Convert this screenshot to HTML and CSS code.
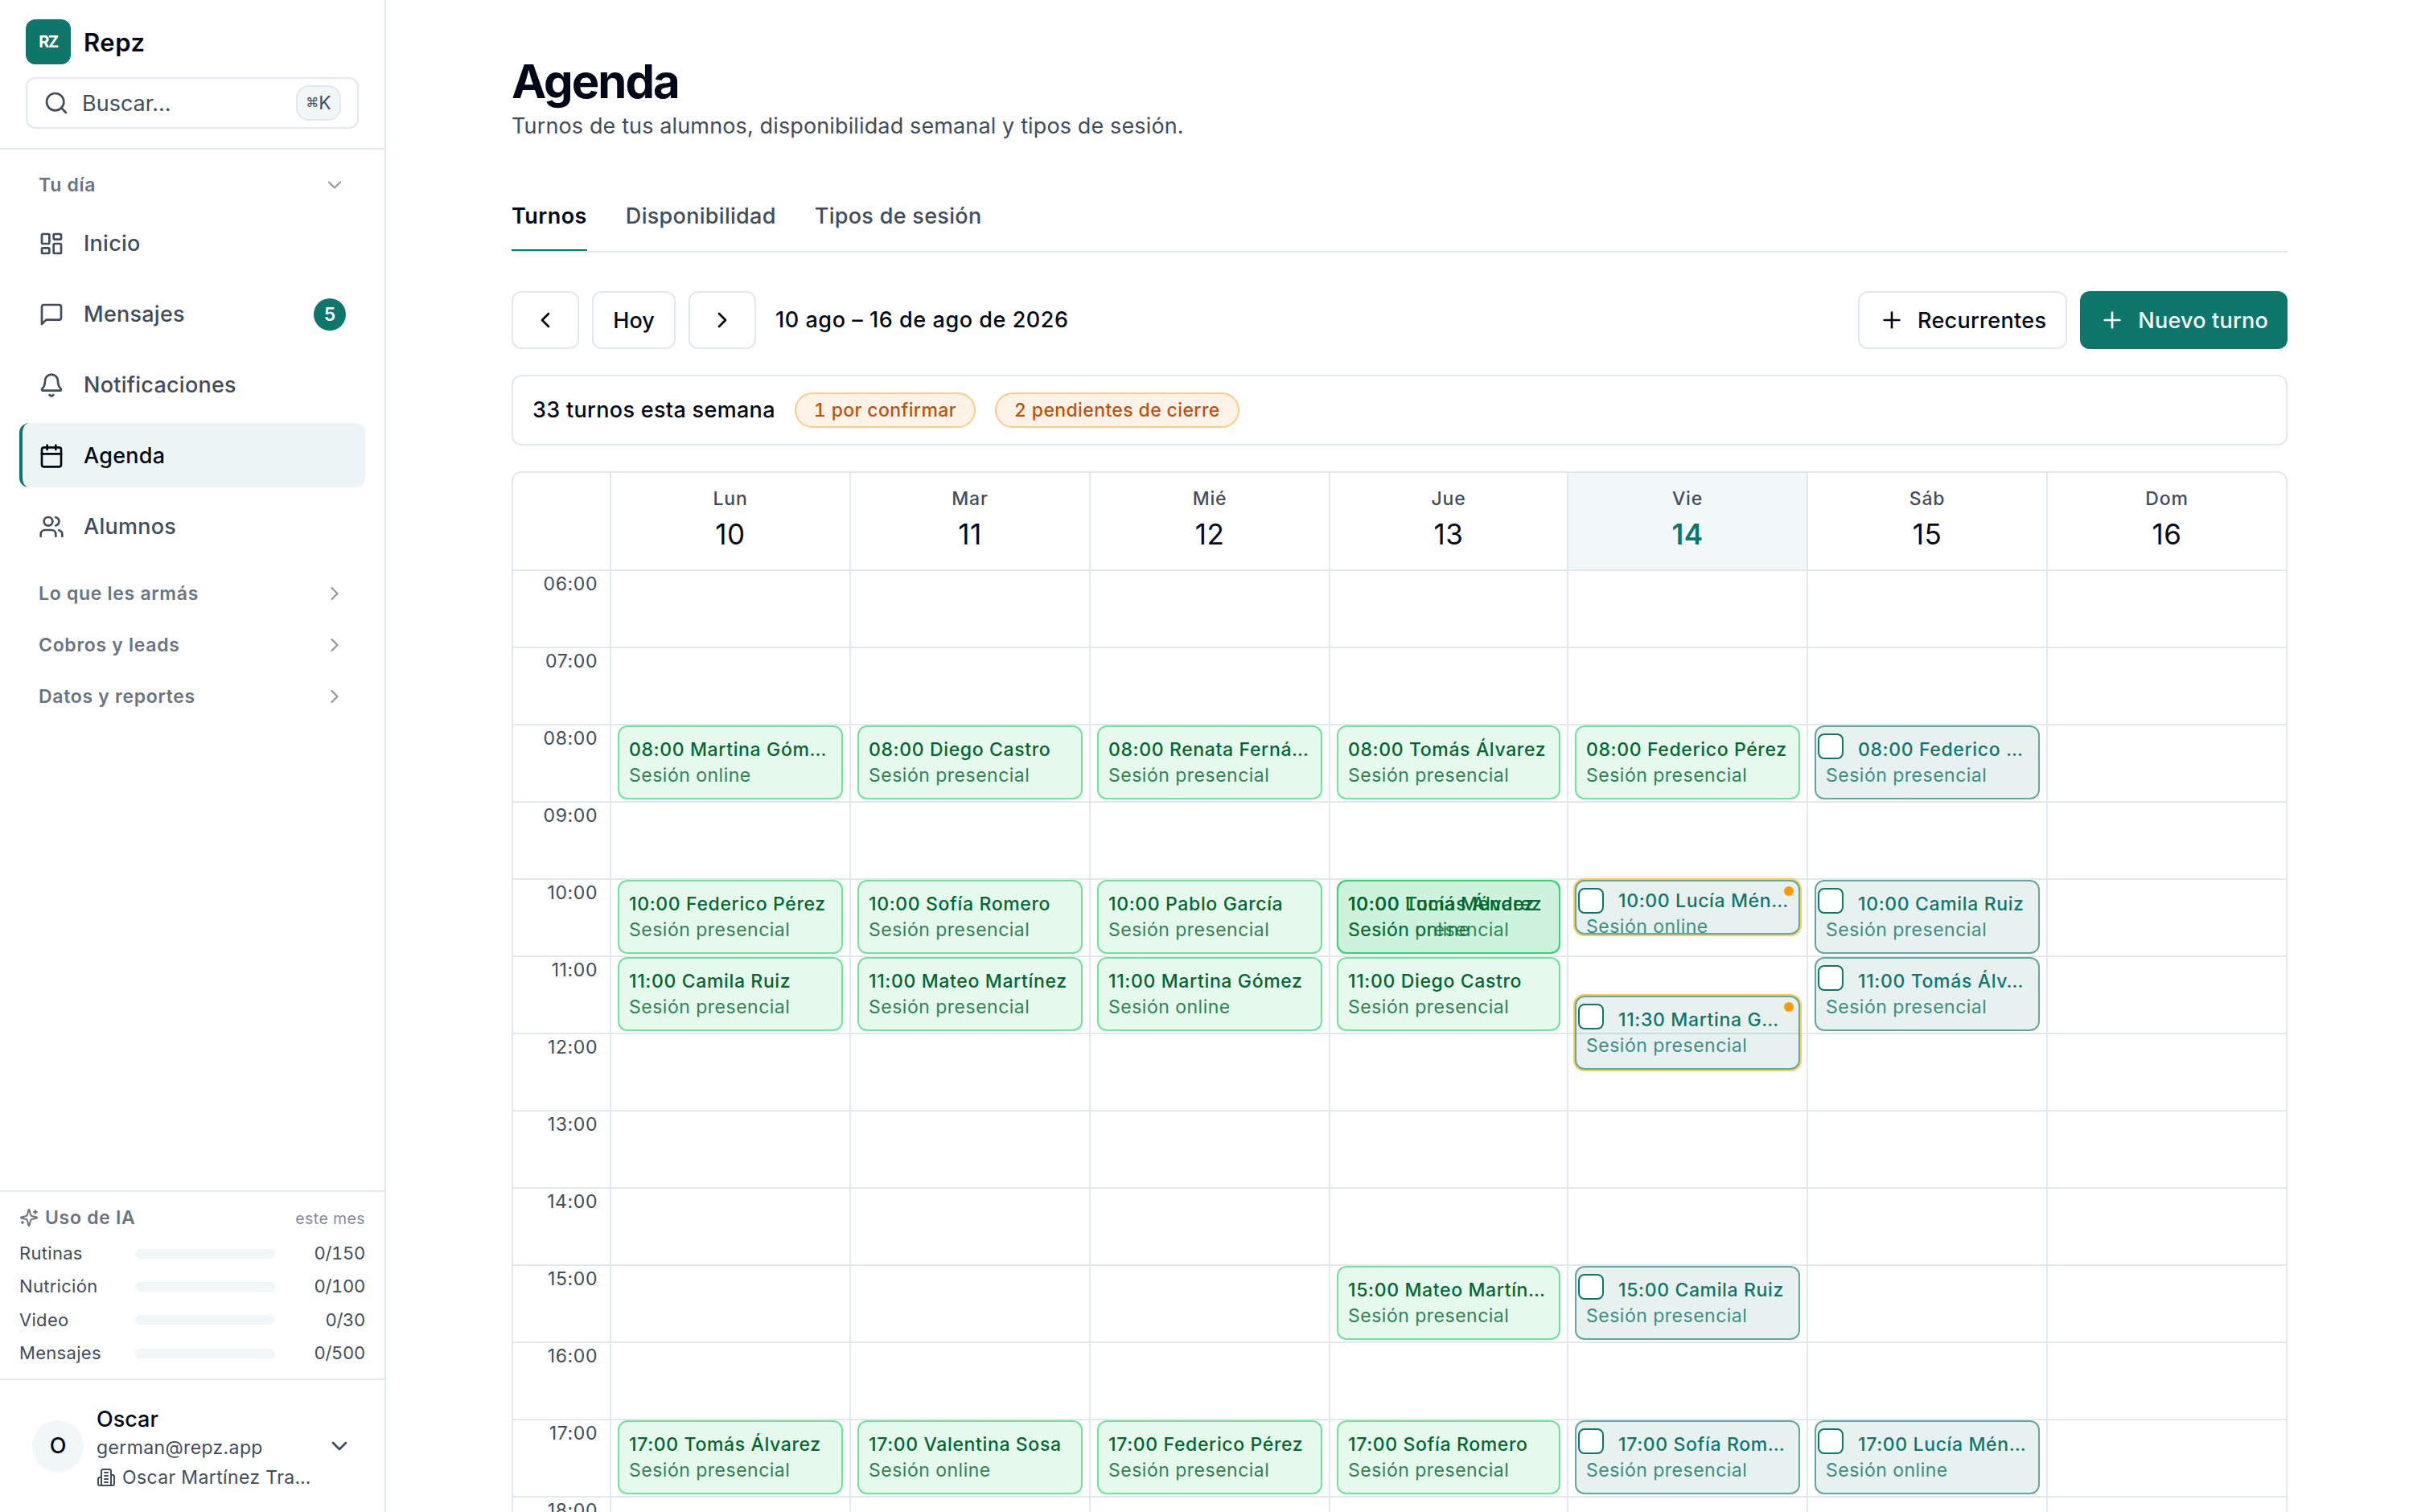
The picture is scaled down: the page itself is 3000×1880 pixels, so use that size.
FILE: index.html
```html
<!DOCTYPE html>
<html lang="es">
<head>
    <meta charset="UTF-8">
    <meta name="viewport" content="width=device-width, initial-scale=1.0">
    <title>Repz - Agenda</title>
    <link rel="stylesheet" href="styles.css">
</head>
<body>
    <!-- icons -->
    <svg class="sprite" xmlns="http://www.w3.org/2000/svg">
        <symbol id="i-search" viewBox="0 0 24 24"><circle cx="11" cy="11" r="8"/><path d="m21 21-4.3-4.3"/></symbol>
        <symbol id="i-down" viewBox="0 0 24 24"><path d="m6 9 6 6 6-6"/></symbol>
        <symbol id="i-right" viewBox="0 0 24 24"><path d="m9 18 6-6-6-6"/></symbol>
        <symbol id="i-left" viewBox="0 0 24 24"><path d="m15 18-6-6 6-6"/></symbol>
        <symbol id="i-plus" viewBox="0 0 24 24"><path d="M5 12h14"/><path d="M12 5v14"/></symbol>
        <symbol id="i-dashboard" viewBox="0 0 24 24"><rect x="3" y="3" width="7" height="9" rx="1"/><rect x="14" y="3" width="7" height="5" rx="1"/><rect x="14" y="12" width="7" height="9" rx="1"/><rect x="3" y="16" width="7" height="5" rx="1"/></symbol>
        <symbol id="i-message" viewBox="0 0 24 24"><path d="M21 15a2 2 0 0 1-2 2H7l-4 4V5a2 2 0 0 1 2-2h14a2 2 0 0 1 2 2z"/></symbol>
        <symbol id="i-bell" viewBox="0 0 24 24"><path d="M10.268 21a2 2 0 0 0 3.464 0"/><path d="M3.262 15.326A1 1 0 0 0 4 17h16a1 1 0 0 0 .74-1.673C19.41 13.956 18 12.499 18 8A6 6 0 0 0 6 8c0 4.499-1.411 5.956-2.738 7.326"/></symbol>
        <symbol id="i-calendar" viewBox="0 0 24 24"><path d="M8 2v4"/><path d="M16 2v4"/><rect x="3" y="4" width="18" height="18" rx="2"/><path d="M3 10h18"/></symbol>
        <symbol id="i-users" viewBox="0 0 24 24"><path d="M16 21v-2a4 4 0 0 0-4-4H6a4 4 0 0 0-4 4v2"/><circle cx="9" cy="7" r="4"/><path d="M22 21v-2a4 4 0 0 0-3-3.87"/><path d="M16 3.13a4 4 0 0 1 0 7.75"/></symbol>
        <symbol id="i-sparkles" viewBox="0 0 24 24"><path d="M9.937 15.5A2 2 0 0 0 8.5 14.063l-6.135-1.582a.5.5 0 0 1 0-.962L8.5 9.936A2 2 0 0 0 9.937 8.5l1.582-6.135a.5.5 0 0 1 .963 0L14.063 8.5A2 2 0 0 0 15.5 9.937l6.135 1.581a.5.5 0 0 1 0 .964L15.5 14.063a2 2 0 0 0-1.437 1.437l-1.582 6.135a.5.5 0 0 1-.963 0z"/><path d="M20 3v4"/><path d="M22 5h-4"/><path d="M4 17v2"/><path d="M5 18H3"/></symbol>
        <symbol id="i-building" viewBox="0 0 24 24"><path d="M6 22V4a2 2 0 0 1 2-2h8a2 2 0 0 1 2 2v18Z"/><path d="M6 12H4a2 2 0 0 0-2 2v6a2 2 0 0 0 2 2h2"/><path d="M18 9h2a2 2 0 0 1 2 2v9a2 2 0 0 1-2 2h-2"/><path d="M10 6h4"/><path d="M10 10h4"/><path d="M10 14h4"/><path d="M10 18h4"/></symbol>
    </svg>

    <div class="app">
        <aside class="sidebar">
            <div class="sidebar-top">
                <div class="brand">
                    <div class="logo">RZ</div>
                    <span class="brand-name">Repz</span>
                </div>
                <div class="search">
                    <svg class="icon"><use href="#i-search"/></svg>
                    <span class="search-text">Buscar…</span>
                    <kbd class="kbd"><span class="cmd">⌘</span>K</kbd>
                </div>
            </div>

            <nav class="nav">
                <div class="nav-head">Tu día<svg class="icon icon-sm"><use href="#i-down"/></svg></div>
                <div class="nav-list">
                    <a class="nav-item"><svg class="icon"><use href="#i-dashboard"/></svg>Inicio</a>
                    <a class="nav-item"><svg class="icon"><use href="#i-message"/></svg>Mensajes<span class="count">5</span></a>
                    <a class="nav-item"><svg class="icon"><use href="#i-bell"/></svg>Notificaciones</a>
                    <a class="nav-item active"><svg class="icon"><use href="#i-calendar"/></svg>Agenda</a>
                    <a class="nav-item"><svg class="icon"><use href="#i-users"/></svg>Alumnos</a>
                </div>
                <div class="nav-head">Lo que les armás<svg class="icon icon-sm"><use href="#i-right"/></svg></div>
                <div class="nav-head">Cobros y leads<svg class="icon icon-sm"><use href="#i-right"/></svg></div>
                <div class="nav-head">Datos y reportes<svg class="icon icon-sm"><use href="#i-right"/></svg></div>
            </nav>

            <div class="usage">
                <div class="usage-head">
                    <svg class="icon icon-xs"><use href="#i-sparkles"/></svg>
                    <span class="usage-title">Uso de IA</span>
                    <span class="usage-period">este mes</span>
                </div>
                <div class="usage-row"><span>Rutinas</span><div class="bar"></div><span class="usage-value">0/150</span></div>
                <div class="usage-row"><span>Nutrición</span><div class="bar"></div><span class="usage-value">0/100</span></div>
                <div class="usage-row"><span>Video</span><div class="bar"></div><span class="usage-value">0/30</span></div>
                <div class="usage-row"><span>Mensajes</span><div class="bar"></div><span class="usage-value">0/500</span></div>
            </div>

            <div class="user">
                <div class="avatar">O</div>
                <div class="user-info">
                    <div class="user-name">Oscar</div>
                    <div class="user-mail">german@repz.app</div>
                    <div class="user-org"><svg class="icon icon-xs"><use href="#i-building"/></svg>Oscar Martínez Tra…</div>
                </div>
                <svg class="icon"><use href="#i-down"/></svg>
            </div>
        </aside>

        <main class="main">
            <h1 class="title">Agenda</h1>
            <p class="subtitle">Turnos de tus alumnos, disponibilidad semanal y tipos de sesión.</p>

            <div class="tabs">
                <a class="tab selected">Turnos</a>
                <a class="tab">Disponibilidad</a>
                <a class="tab">Tipos de sesión</a>
            </div>

            <div class="toolbar">
                <button class="btn btn-icon"><svg class="icon"><use href="#i-left"/></svg></button>
                <button class="btn btn-today">Hoy</button>
                <button class="btn btn-icon"><svg class="icon"><use href="#i-right"/></svg></button>
                <span class="range">10 ago – 16 de ago de 2026</span>
                <button class="btn"><svg class="icon"><use href="#i-plus"/></svg>Recurrentes</button>
                <button class="btn btn-primary"><svg class="icon"><use href="#i-plus"/></svg>Nuevo turno</button>
            </div>

            <div class="summary">
                <span class="summary-text">33 turnos esta semana</span>
                <span class="pill">1 por confirmar</span>
                <span class="pill">2 pendientes de cierre</span>
            </div>

            <div class="calendar">
                <div class="cal-head" id="calHead"><div></div></div>
                <div class="cal-body" id="calBody"><div class="hours" id="hours"></div></div>
            </div>
        </main>
    </div>

    <script>
        const START = 6;
        const END = 19;
        const HOUR = 96;
        const P = "Sesión presencial";
        const O = "Sesión online";

        // at: hour, done: already closed, warn: needs attention
        const days = [
            {name: "Lun", num: 10, events: [
                {at: 8, text: "08:00 Martina Góm…", type: O, done: true},
                {at: 10, text: "10:00 Federico Pérez", type: P, done: true},
                {at: 11, text: "11:00 Camila Ruiz", type: P, done: true},
                {at: 17, text: "17:00 Tomás Álvarez", type: P, done: true}
            ]},
            {name: "Mar", num: 11, events: [
                {at: 8, text: "08:00 Diego Castro", type: P, done: true},
                {at: 10, text: "10:00 Sofía Romero", type: P, done: true},
                {at: 11, text: "11:00 Mateo Martínez", type: P, done: true},
                {at: 17, text: "17:00 Valentina Sosa", type: O, done: true}
            ]},
            {name: "Mié", num: 12, events: [
                {at: 8, text: "08:00 Renata Ferná…", type: P, done: true},
                {at: 10, text: "10:00 Pablo García", type: P, done: true},
                {at: 11, text: "11:00 Martina Gómez", type: O, done: true},
                {at: 17, text: "17:00 Federico Pérez", type: P, done: true}
            ]},
            {name: "Jue", num: 13, events: [
                {at: 8, text: "08:00 Tomás Álvarez", type: P, done: true},
                {at: 10, text: "10:00 Tomás Álvarez", type: P, done: true},
                {at: 10, text: "10:00 Lucía Méndez", type: O, done: true},
                {at: 11, text: "11:00 Diego Castro", type: P, done: true},
                {at: 15, text: "15:00 Mateo Martín…", type: P, done: true},
                {at: 17, text: "17:00 Sofía Romero", type: P, done: true}
            ]},
            {name: "Vie", num: 14, today: true, events: [
                {at: 8, text: "08:00 Federico Pérez", type: P, done: true},
                {at: 10, text: "10:00 Lucía Mén…", type: O, warn: true, hours: 0.75},
                {at: 11.5, text: "11:30 Martina G…", type: P, warn: true},
                {at: 15, text: "15:00 Camila Ruiz", type: P},
                {at: 17, text: "17:00 Sofía Rom…", type: P}
            ]},
            {name: "Sáb", num: 15, events: [
                {at: 8, text: "08:00 Federico …", type: P},
                {at: 10, text: "10:00 Camila Ruiz", type: P},
                {at: 11, text: "11:00 Tomás Álv…", type: P},
                {at: 17, text: "17:00 Lucía Mén…", type: O}
            ]},
            {name: "Dom", num: 16, events: []}
        ];

        const buildEvent = (ev) => {
            const top = (ev.at - START) * HOUR;
            const height = (ev.hours || 1) * HOUR - 4;
            const cls = (ev.done ? "done" : "open") + (ev.warn ? " warn" : "");
            return `<div class="slot" style="top:${top}px;height:${height}px">
                        <div class="event ${cls}">
                            <div class="event-title">${ev.text}</div>
                            <div class="event-type">${ev.type}</div>
                        </div>
                        ${ev.done ? "" : '<span class="check"></span>'}
                        ${ev.warn ? '<span class="dot"></span>' : ""}
                    </div>`;
        };

        let hourLabels = "";
        let cells = "";
        for (let h = START; h < END; h++) {
            hourLabels += `<div class="cell">${String(h).padStart(2, "0")}:00</div>`;
            cells += '<div class="cell"></div>';
        }
        document.getElementById("hours").innerHTML = hourLabels;

        let heads = "";
        let columns = "";
        days.forEach(day => {
            heads += `<div class="day-head${day.today ? " today" : ""}">
                        <div class="day-name">${day.name}</div>
                        <div class="day-num">${day.num}</div>
                    </div>`;
            columns += `<div class="day">${cells}${day.events.map(buildEvent).join("")}</div>`;
        });
        document.getElementById("calHead").innerHTML += heads;
        document.getElementById("calBody").innerHTML += columns;
    </script>
</body>
</html>
```
FILE: styles.css
```css
* {
    box-sizing: border-box;
}
body {
    margin: 0;
    height: 100vh;
    overflow: hidden;
    font-family: Inter, "Liberation Sans", sans-serif;
    font-size: 27px;
    line-height: 40px;
    color: #020817;
    background-color: #fff;
}
.sprite {
    display: none;
}
.icon {
    width: 32px;
    height: 32px;
    flex-shrink: 0;
    fill: none;
    stroke: currentColor;
    stroke-width: 2;
    stroke-linecap: round;
    stroke-linejoin: round;
}
.icon-sm {
    width: 28px;
    height: 28px;
}
.icon-xs {
    width: 24px;
    height: 24px;
}
.app {
    display: flex;
    height: 100vh;
}

/* sidebar */
.sidebar {
    width: 480px;
    flex-shrink: 0;
    display: flex;
    flex-direction: column;
    border-right: 2px solid #e2e8f0;
    color: #414c5c;
}
.sidebar-top {
    padding: 24px 32px;
    border-bottom: 2px solid #e2e8f0;
}
.brand {
    display: flex;
    align-items: center;
    gap: 16px;
    margin-bottom: 16px;
}
.logo {
    width: 56px;
    height: 56px;
    display: flex;
    align-items: center;
    justify-content: center;
    border-radius: 12px;
    background-color: #0f766b;
    color: #fff;
    font-size: 20px;
    font-weight: 700;
    letter-spacing: -1.4px;
}
.brand-name {
    padding-top: 2px;
    color: #020817;
    font-size: 31px;
    font-weight: 600;
    letter-spacing: 0.5px;
}
.search {
    height: 64px;
    display: flex;
    align-items: center;
    gap: 16px;
    padding: 0 20px;
    border: 2px solid #e2e8f0;
    border-radius: 12px;
}
.search-text {
    flex: 1;
    padding-top: 2px;
}
.kbd {
    width: 56px;
    height: 44px;
    display: flex;
    align-items: center;
    justify-content: center;
    border: 2px solid #e2e8f0;
    border-radius: 16px;
    background-color: #f1f7f7;
    font-family: inherit;
    font-size: 23px;
}
.cmd {
    font-family: "DejaVu Sans", sans-serif;
    font-size: 16px;
}
.nav {
    flex: 1;
    padding: 12px 24px;
}
.nav-head {
    height: 64px;
    display: flex;
    align-items: center;
    justify-content: space-between;
    padding: 0 24px;
    color: #6a7482;
    font-size: 23px;
    font-weight: 600;
    letter-spacing: 0.7px;
}
.nav-head .icon {
    color: #949ba6;
}
.nav-list {
    display: flex;
    flex-direction: column;
    gap: 8px;
    margin-bottom: 12px;
}
.nav-item {
    height: 80px;
    display: flex;
    align-items: center;
    gap: 24px;
    padding: 1px 24px 0 20px;
    border-left: 4px solid transparent;
    border-radius: 12px;
    font-weight: 500;
    letter-spacing: 0.25px;
}
.nav-item.active {
    border-left-color: #0f766b;
    background-color: #ecf5f4;
    color: #020817;
}
.count {
    width: 40px;
    height: 40px;
    margin-left: auto;
    border-radius: 50%;
    background-color: #0f766b;
    color: #fff;
    font-size: 23px;
    font-weight: 600;
    text-align: center;
    letter-spacing: 0;
}
.usage {
    height: 234px;
    display: flex;
    flex-direction: column;
    gap: 8px;
    padding: 15px 24px 0;
    border-top: 2px solid #e2e8f0;
}
.usage-head {
    display: flex;
    align-items: center;
    gap: 8px;
    margin-bottom: 3px;
    line-height: 32px;
    color: #6a7482;
}
.usage-title {
    flex: 1;
    font-size: 23px;
    font-weight: 600;
    letter-spacing: 0.7px;
}
.usage-period {
    padding-top: 2px;
    color: #848c98;
    font-size: 19.5px;
    letter-spacing: 0.4px;
}
.usage-row {
    display: grid;
    grid-template-columns: 128px 1fr 96px;
    align-items: center;
    gap: 16px;
    font-size: 22px;
    line-height: 33.33px;
    letter-spacing: 0.3px;
}
.bar {
    height: 12px;
    border-radius: 6px;
    background-color: #f1f7f7;
}
.usage-value {
    letter-spacing: -0.3px;
    text-align: right;
    font-variant-numeric: tabular-nums;
}
.user {
    height: 166px;
    display: flex;
    align-items: center;
    padding: 0 40px;
    border-top: 2px solid #e2e8f0;
}
.avatar {
    width: 64px;
    height: 64px;
    flex-shrink: 0;
    display: flex;
    align-items: center;
    justify-content: center;
    border-radius: 50%;
    background-color: #f1f7f7;
    color: #020817;
    font-weight: 500;
}
.user-info {
    flex: 1;
    margin-left: 16px;
    padding-top: 7px;
    font-size: 23px;
    letter-spacing: 0.37px;
    white-space: nowrap;
}
.user-name {
    color: #020817;
    font-size: 27px;
    font-weight: 500;
    line-height: 36px;
    letter-spacing: 0;
}
.user-mail {
    line-height: 34px;
}
.user-org {
    display: flex;
    align-items: center;
    gap: 8px;
}

/* main */
.main {
    flex: 1;
    min-width: 0;
    padding: 65px 156px 0;
    overflow: hidden;
}
.title {
    margin: 0;
    font-size: 58px;
    font-weight: 700;
    line-height: 72px;
    letter-spacing: -1.95px;
}
.subtitle {
    margin: 0 0 71px;
    color: #414c5c;
    letter-spacing: 0.13px;
}
.tabs {
    display: flex;
    gap: 48px;
    margin-bottom: 48px;
    border-bottom: 2px solid #e2e8f0;
}
.tab {
    padding: 1px 0 21px;
    border-bottom: 2px solid transparent;
    color: #414c5c;
    font-weight: 500;
    letter-spacing: 0.3px;
}
.tab.selected {
    border-bottom-color: #0f766b;
    color: #020817;
    font-weight: 600;
    letter-spacing: 0.45px;
}
.toolbar {
    display: flex;
    align-items: center;
    gap: 16px;
    margin-bottom: 32px;
}
.btn {
    height: 72px;
    display: flex;
    align-items: center;
    justify-content: center;
    gap: 16px;
    padding: 0 24px;
    border: 2px solid #e2e8f0;
    border-radius: 12px;
    background-color: #fff;
    color: #020817;
    font-family: inherit;
    font-size: 27px;
    font-weight: 500;
    letter-spacing: 0.3px;
}
.btn-icon {
    width: 84px;
}
.btn-today {
    width: 104px;
    letter-spacing: 0;
}
.btn-primary {
    border: 0;
    background-color: #0f766b;
    color: #f8fafc;
    letter-spacing: 0.22px;
}
.range {
    flex: 1;
    padding-left: 8px;
    font-weight: 500;
    letter-spacing: 0.55px;
}
.summary {
    height: 88px;
    display: flex;
    align-items: center;
    gap: 24px;
    margin-bottom: 32px;
    padding: 0 24px;
    border: 2px solid #e2e8f0;
    border-radius: 12px;
}
.summary-text {
    font-weight: 500;
    letter-spacing: 0.32px;
}
.pill {
    padding: 0 22px;
    border: 2px solid #fbcb8b;
    border-radius: 22px;
    background-color: #fef3e6;
    color: #c2500a;
    font-size: 23px;
    font-weight: 500;
    letter-spacing: 0.38px;
    font-variant-numeric: tabular-nums;
}

/* calendar */
.calendar {
    border: 2px solid #e2e8f0;
    border-radius: 12px;
    overflow: hidden;
}
.cal-head,
.cal-body {
    display: grid;
    grid-template-columns: 120px repeat(3, 298px) 296px repeat(3, 298px);
}
.cal-head {
    border-bottom: 2px solid #e2e8f0;
}
.day-head {
    padding: 16px 0;
    border-left: 2px solid #e2e8f0;
    text-align: center;
}
.day-name {
    color: #414c5c;
    font-size: 23px;
    font-weight: 500;
    line-height: 32px;
    letter-spacing: 0.8px;
}
.day-num {
    font-size: 35px;
    line-height: 56px;
    letter-spacing: 0.5px;
}
.today {
    background-color: #f2f8f8;
}
.today .day-num {
    color: #0f766b;
    font-weight: 600;
}
.cell {
    height: 96px;
    border-bottom: 2px solid #e2e8f0;
}
.hours .cell {
    padding-right: 15px;
    color: #414c5c;
    font-size: 23px;
    line-height: 32px;
    letter-spacing: 0.6px;
    text-align: right;
}
.day {
    position: relative;
    min-width: 0;
    border-left: 2px solid #e2e8f0;
}
.slot {
    position: absolute;
    left: 8px;
    right: 8px;
}
.event {
    height: 100%;
    display: flex;
    flex-direction: column;
    justify-content: safe center;
    padding: 8px 12px;
    border: 2px solid;
    border-radius: 12px;
    overflow: hidden;
    font-size: 23px;
    line-height: 32px;
    white-space: nowrap;
}
.done {
    border-color: rgba(0, 201, 80, 0.5);
    background-color: rgba(0, 201, 80, 0.1);
    color: #016630;
}
.open {
    border-color: rgba(15, 118, 107, 0.6);
    background-color: rgba(15, 118, 107, 0.1);
    color: #0f766b;
}
.warn {
    box-shadow: 0 0 0 2px #ffcb4f;
}
.event-title {
    font-weight: 500;
    letter-spacing: 0.64px;
}
.open .event-title {
    padding-left: 40px;
}
.event-type {
    letter-spacing: 0.5px;
    opacity: 0.8;
}
.check {
    position: absolute;
    top: 10px;
    left: 4px;
    width: 32px;
    height: 32px;
    border: 2px solid #0f766b;
    border-radius: 8px;
    background-color: #fff;
}
.dot {
    position: absolute;
    top: 8px;
    right: 8px;
    width: 12px;
    height: 12px;
    border-radius: 50%;
    background-color: #fe9a00;
}
```
